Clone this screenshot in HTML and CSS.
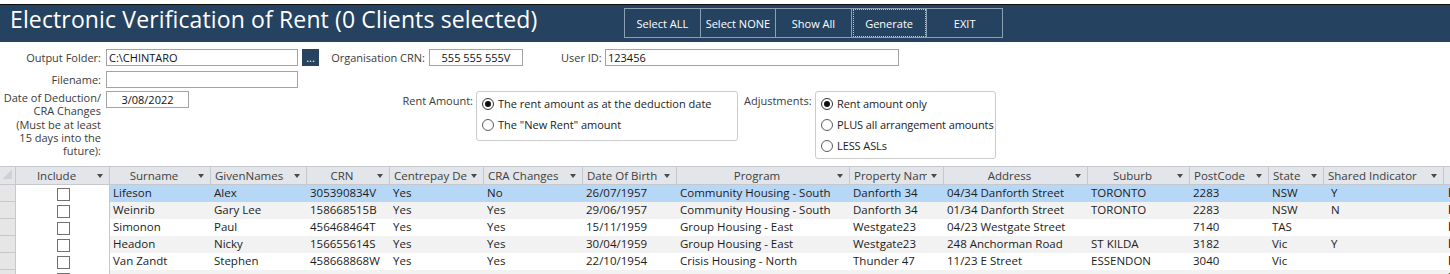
FILE: index.html
```html
<!DOCTYPE html>
<html>
<head>
    <meta charset="UTF-8">
    <meta name="viewport" content="width=device-width, initial-scale=1.0">
    <title>Electronic Verification of Rent</title>
    <link rel="stylesheet" href="styles.css">
</head>
<body>
    <div class="top-strip"></div>

    <div class="header">
        <h1 class="title">Electronic Verification of Rent (0 Clients selected)</h1>
        <div class="actions">
            <button class="action">Select ALL</button>
            <button class="action">Select NONE</button>
            <button class="action">Show All</button>
            <button class="action focused">Generate</button>
            <button class="action">EXIT</button>
        </div>
    </div>

    <div class="form">
        <div class="form-row">
            <label class="lbl lbl-main">Output Folder:</label>
            <div class="field w-path">C:\CHINTARO</div>
            <button class="browse">...</button>
            <label class="lbl lbl-org">Organisation CRN:</label>
            <div class="field w-crn centered">555 555 555V</div>
            <label class="lbl lbl-user">User ID:</label>
            <div class="field w-user">123456</div>
        </div>
        <div class="form-row row-file">
            <label class="lbl lbl-main">Filename:</label>
            <div class="field w-path"></div>
        </div>
        <div class="form-row row-options">
            <label class="lbl lbl-main lbl-multi">Date of Deduction/<br>CRA Changes<br>(Must be at least<br>15 days into the<br>future):</label>
            <div class="field w-date centered">3/08/2022</div>

            <label class="lbl lbl-rent">Rent Amount:</label>
            <div class="option-box w-rent">
                <div class="option"><span class="radio on"><span class="dot"></span></span>The rent amount as at the deduction date</div>
                <div class="option"><span class="radio"></span>The "New Rent" amount</div>
            </div>

            <label class="lbl lbl-adj">Adjustments:</label>
            <div class="option-box w-adj">
                <div class="option"><span class="radio on"><span class="dot"></span></span>Rent amount only</div>
                <div class="option"><span class="radio"></span>PLUS all arrangement amounts</div>
                <div class="option"><span class="radio"></span>LESS ASLs</div>
            </div>
        </div>
    </div>

    <div class="grid">
        <div class="grid-row grid-head">
            <div class="hcell corner"><span class="corner-mark"></span></div>
            <div class="hcell mid"><span class="hl">Include</span><span class="arr"></span></div>
            <div class="hcell mid"><span class="hl">Surname</span><span class="arr"></span></div>
            <div class="hcell"><span class="hl">GivenNames</span><span class="arr"></span></div>
            <div class="hcell mid"><span class="hl">CRN</span><span class="arr"></span></div>
            <div class="hcell"><span class="hl">Centrepay Deduction</span><span class="arr"></span></div>
            <div class="hcell"><span class="hl">CRA Changes</span><span class="arr"></span></div>
            <div class="hcell"><span class="hl">Date Of Birth</span><span class="arr"></span></div>
            <div class="hcell mid"><span class="hl">Program</span><span class="arr"></span></div>
            <div class="hcell"><span class="hl">Property Name</span><span class="arr"></span></div>
            <div class="hcell mid"><span class="hl">Address</span><span class="arr"></span></div>
            <div class="hcell mid"><span class="hl">Suburb</span><span class="arr"></span></div>
            <div class="hcell"><span class="hl">PostCode</span><span class="arr"></span></div>
            <div class="hcell"><span class="hl">State</span><span class="arr"></span></div>
            <div class="hcell"><span class="hl">Shared Indicator</span><span class="arr"></span></div>
            <div class="hcell"></div>
        </div>
        <div id="grid-body"></div>
    </div>

    <script>
        const clients = [
            { surname: "Lifeson", given: "Alex", crn: "305390834V", centrepay: "Yes", cra: "No", dob: "26/07/1957", program: "Community Housing - South", property: "Danforth 34", address: "04/34 Danforth Street", suburb: "TORONTO", postcode: "2283", state: "NSW", shared: "Y" },
            { surname: "Weinrib", given: "Gary Lee", crn: "158668515B", centrepay: "Yes", cra: "Yes", dob: "29/06/1957", program: "Community Housing - South", property: "Danforth 34", address: "01/34 Danforth Street", suburb: "TORONTO", postcode: "2283", state: "NSW", shared: "N" },
            { surname: "Simonon", given: "Paul", crn: "456468464T", centrepay: "Yes", cra: "Yes", dob: "15/11/1959", program: "Group Housing - East", property: "Westgate23", address: "04/23 Westgate Street", suburb: "", postcode: "7140", state: "TAS", shared: "" },
            { surname: "Headon", given: "Nicky", crn: "156655614S", centrepay: "Yes", cra: "Yes", dob: "30/04/1959", program: "Group Housing - East", property: "Westgate23", address: "248 Anchorman Road", suburb: "ST KILDA", postcode: "3182", state: "Vic", shared: "Y" },
            { surname: "Van Zandt", given: "Stephen", crn: "458668868W", centrepay: "Yes", cra: "Yes", dob: "22/10/1954", program: "Crisis Housing - North", property: "Thunder 47", address: "11/23 E Street", suburb: "ESSENDON", postcode: "3040", state: "Vic", shared: "" },
            { surname: "Ruffin", given: "Susan", crn: "354219087K", centrepay: "Yes", cra: "Yes", dob: "12/03/1961", program: "Community Housing - West", property: "Wellington 9", address: "9 Hill Street", suburb: "FOOTSCRAY", postcode: "3011", state: "Vic", shared: "" }
        ];

        function renderGrid() {
            const body = document.getElementById("grid-body");
            let html = "";
            clients.forEach((c, i) => {
                let cls = "grid-row";
                if (i === 0) {
                    cls += " selected";
                } else if (i % 2 === 1) {
                    cls += " alt";
                }
                html += `
                    <div class="${cls}">
                        <div class="sel-cell"></div>
                        <div class="inc-cell"><span class="check"></span></div>
                        <div class="cell">${c.surname}</div>
                        <div class="cell">${c.given}</div>
                        <div class="cell">${c.crn}</div>
                        <div class="cell">${c.centrepay}</div>
                        <div class="cell">${c.cra}</div>
                        <div class="cell">${c.dob}</div>
                        <div class="cell">${c.program}</div>
                        <div class="cell">${c.property}</div>
                        <div class="cell">${c.address}</div>
                        <div class="cell">${c.suburb}</div>
                        <div class="cell">${c.postcode}</div>
                        <div class="cell">${c.state}</div>
                        <div class="cell shared">${c.shared}</div>
                        <div class="cell extra">I</div>
                    </div>
                `;
            });
            body.innerHTML = html;
        }

        renderGrid();
    </script>
</body>
</html>
```

FILE: styles.css
```css
html, body {
    margin: 0;
    height: 100%;
    overflow: hidden;
}
body {
    font-family: "Open Sans", "Noto Sans", sans-serif;
    background: #fff;
    color: #222;
}
.top-strip {
    height: 4px;
    background: #fff;
}

/* title bar */
.header {
    display: flex;
    align-items: flex-start;
    height: 38px;
    box-sizing: border-box;
    padding: 3px 10px 0;
    background: #254361;
    border-top: 1px solid #0d0d0d;
}
.title {
    width: 614px;
    margin: 0;
    font-size: 23px;
    line-height: 23px;
    letter-spacing: 0.13px;
    font-weight: normal;
    color: #fff;
    white-space: nowrap;
}
.actions {
    display: flex;
    height: 30px;
    border-left: 1px solid #8d9fb3;
}
.action {
    width: 75.6px;
    height: 30px;
    box-sizing: border-box;
    border: 1px solid #8d9fb3;
    border-left: none;
    background: #254361;
    color: #fff;
    font-family: "Open Sans", "Noto Sans", sans-serif;
    font-size: 11px;
    padding: 0;
    cursor: pointer;
}
.action.focused {
    outline: 1px dotted #b9c4d0;
    outline-offset: -2px;
}

/* form */
.form {
    padding-top: 7px;
    font-size: 11px;
}
.form-row {
    display: flex;
    align-items: center;
}
.row-file {
    margin-top: 5px;
}
.row-options {
    margin-top: 3px;
    align-items: flex-start;
}
.lbl {
    color: #3b3b3b;
    text-align: right;
    white-space: nowrap;
    line-height: 13.25px;
}
.lbl-main {
    width: 101px;
    margin-right: 5px;
}
.lbl-multi {
    padding-top: 0;
}
.lbl-org {
    width: 95px;
    margin-left: 11px;
    margin-right: 4px;
}
.lbl-user {
    width: 40px;
    margin-left: 38px;
    margin-right: 4px;
}
.lbl-rent {
    width: 76px;
    margin-left: 208px;
    margin-right: 3px;
    padding-top: 3px;
}
.lbl-adj {
    width: 67px;
    margin-left: 6px;
    margin-right: 4px;
    padding-top: 3px;
}
.field {
    height: 17px;
    box-sizing: border-box;
    border: 1px solid #a3a3a3;
    padding: 0 2px;
    line-height: 15px;
    color: #111;
    white-space: nowrap;
}
.centered {
    text-align: center;
}
.w-path { width: 192px; }
.w-crn { width: 94px; }
.w-user { width: 294px; }
.w-date { width: 83px; }
.browse {
    width: 17px;
    height: 17px;
    margin-left: 4px;
    padding: 0;
    border: none;
    background: #26445f;
    color: #fff;
    font-size: 11px;
    line-height: 17px;
    font-family: "Open Sans", "Noto Sans", sans-serif;
}
.option-box {
    box-sizing: border-box;
    border: 1px solid #cbcbcb;
    border-radius: 3px;
    padding: 1px 0 5px 5px;
    color: #222;
}
.w-rent { width: 262px; }
.w-adj {
    width: 181px;
    padding-bottom: 2px;
    letter-spacing: -0.1px;
}
.option {
    display: flex;
    align-items: center;
    height: 21px;
    white-space: nowrap;
}
.radio {
    display: flex;
    align-items: center;
    justify-content: center;
    width: 12px;
    height: 12px;
    box-sizing: border-box;
    margin-right: 4px;
    border: 1px solid #5c5c5c;
    border-radius: 50%;
    background: #fff;
}
.radio.on {
    border-color: #333;
}
.dot {
    width: 6px;
    height: 6px;
    border-radius: 50%;
    background: #111;
}

/* datasheet */
.grid {
    margin-top: 7px;
    border-top: 1px solid #c5c9ce;
    font-size: 11.5px;
}
.grid-row {
    display: grid;
    grid-template-columns: 16px 94px 101px 96px 83px 94px 99px 94px 173px 94px 144px 102px 79px 55px 120px 60px;
    height: 17px;
    line-height: 16px;
    background: #fff;
}
.grid-row.alt {
    background: #f2f2f2;
}
.grid-row.selected {
    background: #b7d7f7;
}
.grid-head {
    background: #e2e5e9;
    border-bottom: 1px solid #c5c9ce;
    line-height: 16px;
    color: #404040;
}
.hcell {
    display: flex;
    align-items: center;
    padding: 0 6px 0 4px;
    border-right: 1px solid #c5c9ce;
    overflow: hidden;
}
.hcell.corner {
    padding: 0;
    align-items: flex-start;
}
.corner-mark {
    width: 10px;
    height: 10px;
    margin: 2px 0 0 2px;
    background: linear-gradient(to bottom right, transparent 50%, #cdd1d6 50%);
}
.hl {
    flex: 1;
    overflow: hidden;
    white-space: nowrap;
}
.mid .hl {
    text-align: center;
}
.arr {
    flex: none;
    width: 0;
    height: 0;
    margin-left: 4px;
    border-left: 3px solid transparent;
    border-right: 3px solid transparent;
    border-top: 4px solid #4a4a4a;
}
.sel-cell {
    background: #e6e6e6;
    border-right: 1px solid #c8c8c8;
    border-bottom: 1px solid #c8c8c8;
}
.inc-cell {
    display: flex;
    justify-content: center;
    align-items: flex-start;
    padding: 3px 0 0 2px;
    background: #fff;
    border-right: 1px solid #c8c8c8;
}
.check {
    width: 13px;
    height: 13px;
    box-sizing: border-box;
    border: 1px solid #707070;
    background: #fff;
}
.cell {
    padding-left: 3px;
    white-space: nowrap;
    overflow: hidden;
    color: #1c1c1c;
}
.cell.shared {
    padding-left: 7px;
}
.cell.extra {
    padding-left: 4px;
    color: #5a2d12;
    font-weight: bold;
}
```
